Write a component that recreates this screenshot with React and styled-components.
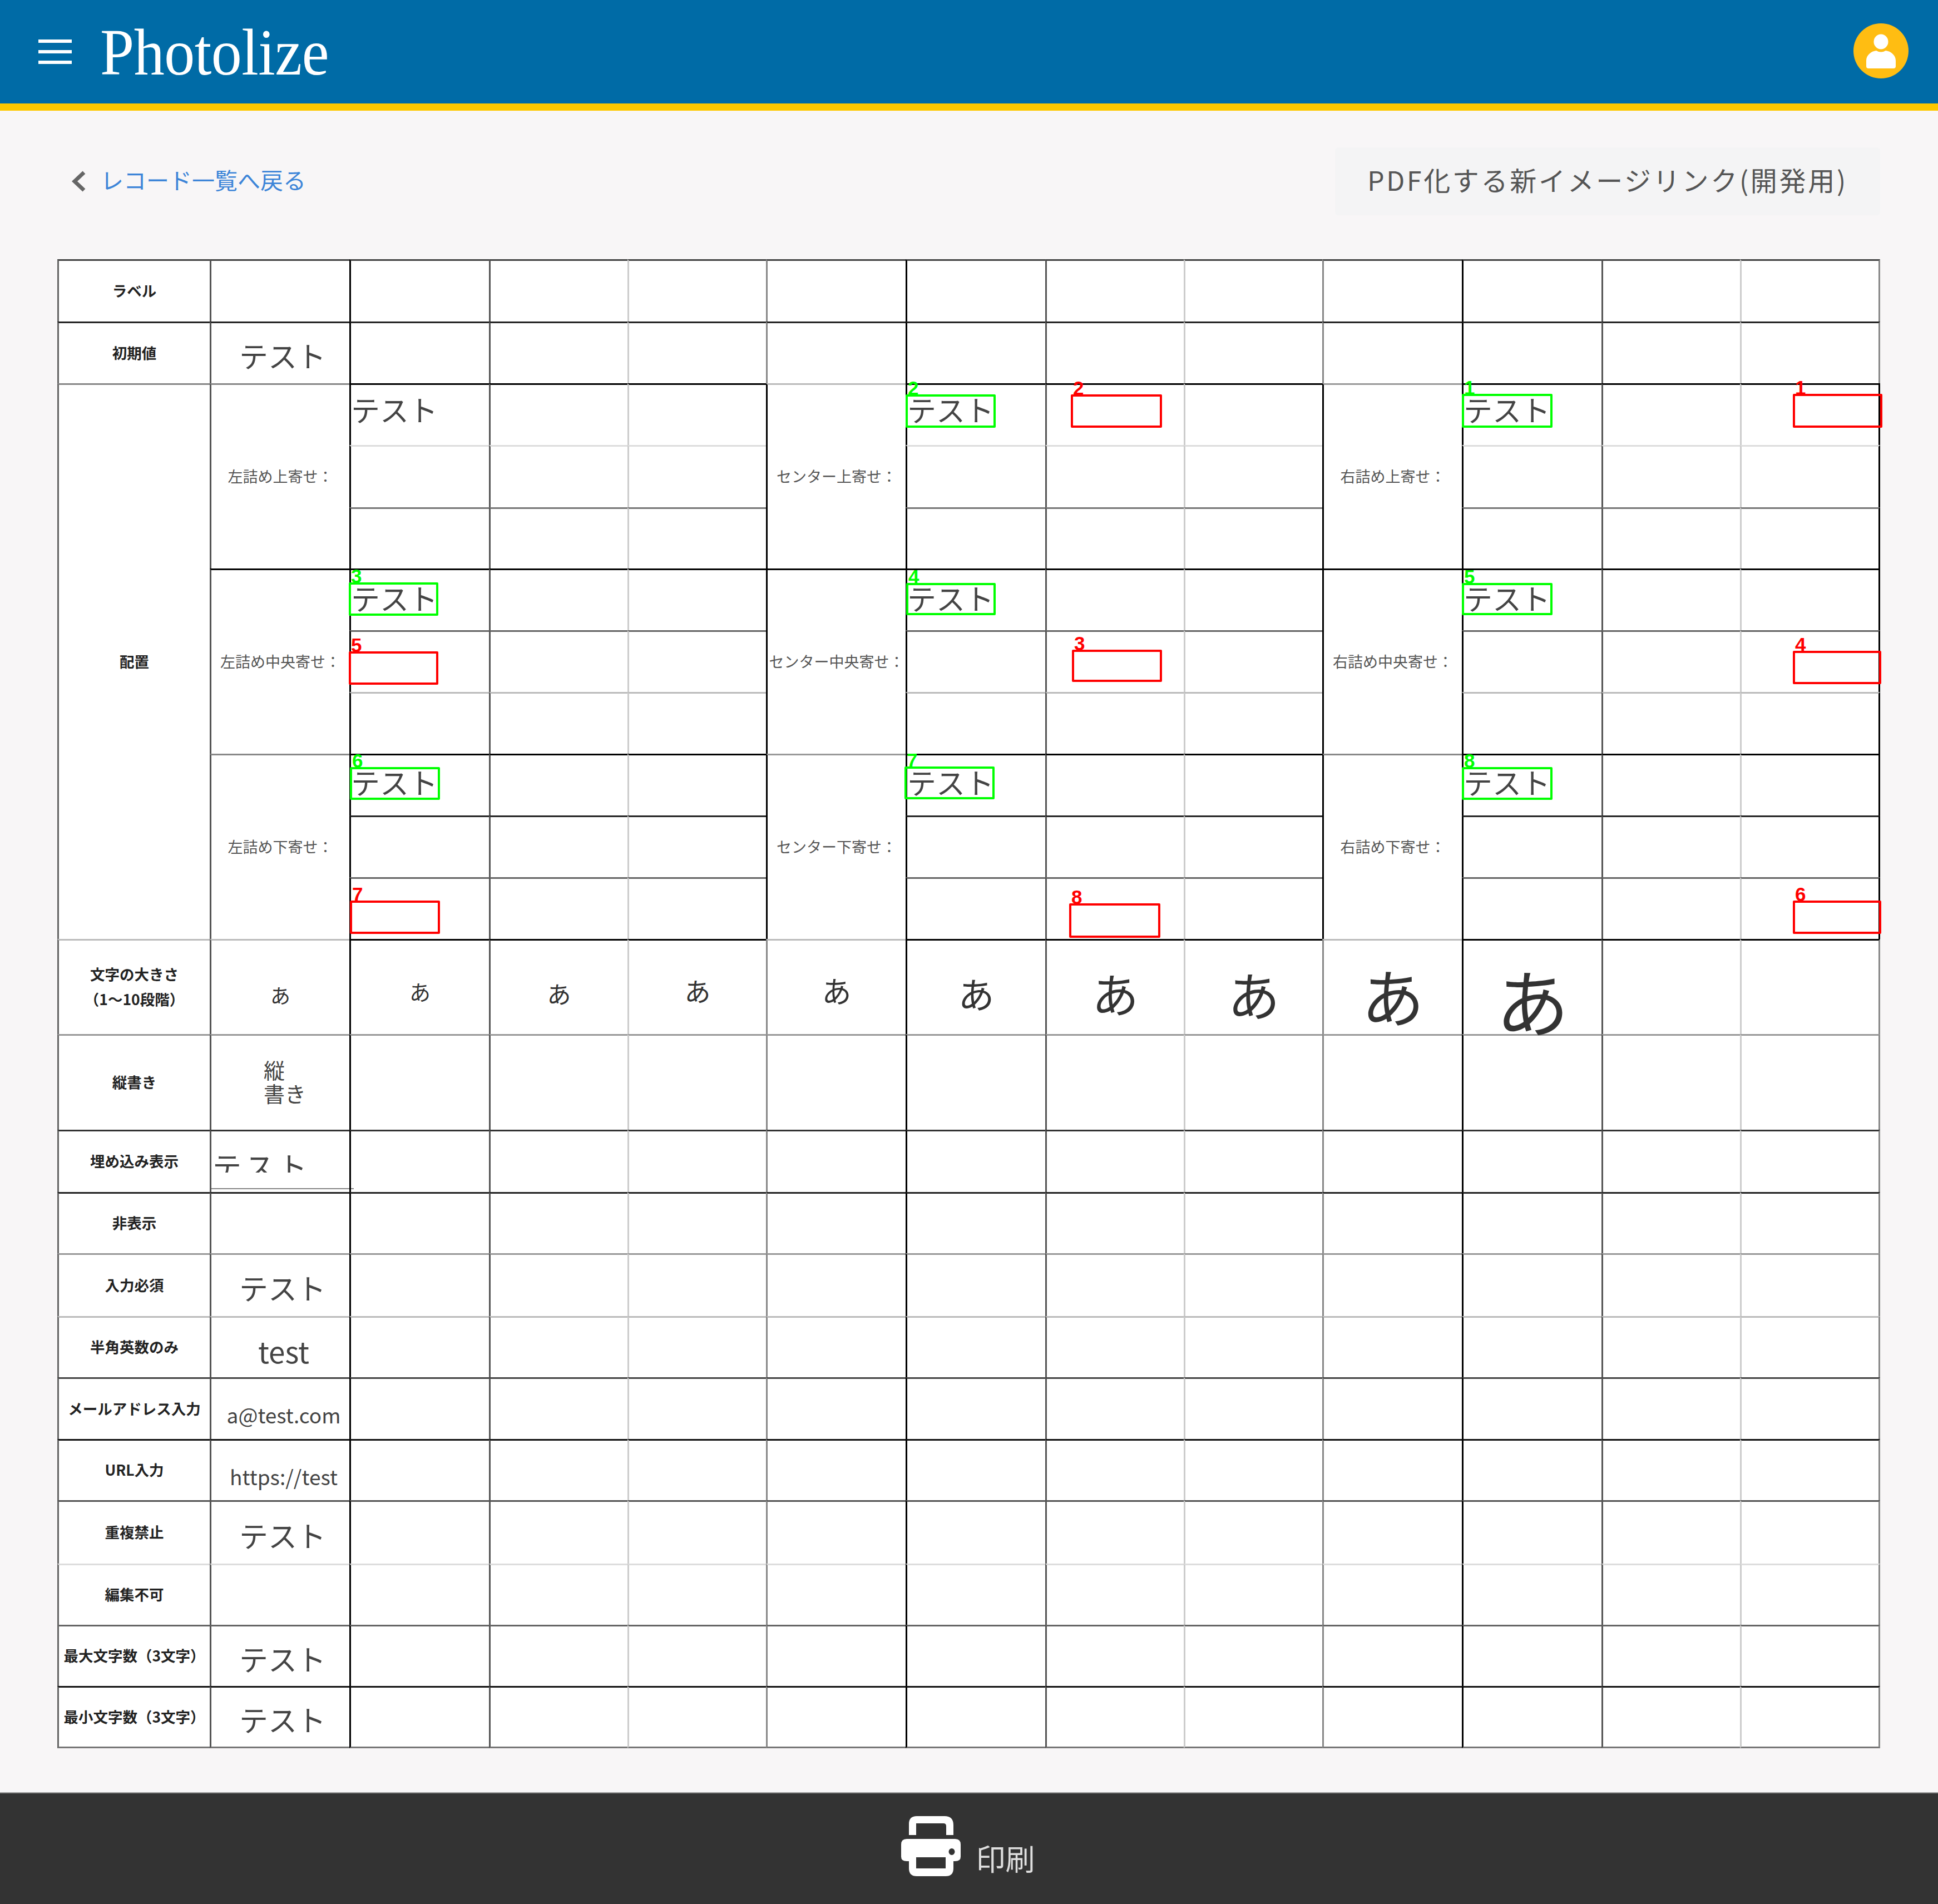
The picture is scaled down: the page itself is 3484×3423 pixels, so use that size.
import React from "react";
import styled, { createGlobalStyle, css } from "styled-components";

const Global = createGlobalStyle`
  html, body { margin: 0; padding: 0; background: #f8f6f7; }
  body { font-family: "Noto Sans CJK JP", "Noto Sans", sans-serif; color: #333; }
`;

const Page = styled.div`
  display: flex;
  flex-direction: column;
  width: 3484px;
  height: 3423px;
  background: #f8f6f7;
`;

const Header = styled.header`
  flex: none;
  display: flex;
  align-items: center;
  box-sizing: border-box;
  height: 199px;
  padding: 0 53px 0 69px;
  background: #006ba6;
  border-bottom: 13px solid #fdc800;
`;

const MenuIcon = styled.svg`
  flex: none;
  width: 60px;
  height: 44px;
  margin-right: 51px;
`;

const Logo = styled.div`
  font-family: "Liberation Serif", "Times New Roman", serif;
  font-size: 110px;
  line-height: 1;
  letter-spacing: -0.5px;
  color: #fff;
  transform: translateY(1px) scaleY(1.08);
`;

const Avatar = styled.svg`
  flex: none;
  width: 99px;
  height: 99px;
  margin: 0 0 3px auto;
`;

const Main = styled.main`
  flex: 1;
  display: flex;
  flex-direction: column;
  padding: 66px 104px 0 103px;
`;

const Toolbar = styled.div`
  flex: none;
  display: flex;
  align-items: center;
  justify-content: space-between;
  height: 122px;
  margin-bottom: 79px;
  padding-left: 26px;
`;

const BackLink = styled.a`
  display: flex;
  align-items: center;
  gap: 26px;
  font-size: 41px;
  line-height: 1;
  color: #3d85d8;
`;

const BackText = styled.span`
  padding-bottom: 8px;
`;

const Chevron = styled.svg`
  flex: none;
  width: 26px;
  height: 38px;
`;

const PdfButton = styled.button`
  display: flex;
  align-items: center;
  justify-content: center;
  box-sizing: border-box;
  width: 980px;
  height: 122px;
  padding: 0 0 8px;
  border: 0;
  border-radius: 6px;
  background: #f4f4f5;
  color: #555;
  font-family: inherit;
  font-size: 48px;
  letter-spacing: 3.7px;
`;

const SheetWrap = styled.div`
  position: relative;
  flex: none;
  width: 3277px;
`;

const Sheet = styled.table`
  width: 3277px;
  table-layout: fixed;
  border-collapse: separate;
  border-spacing: 0;
  background: #fff;
`;

const cellLines = css`
  box-sizing: border-box;
  padding: 0;
  border-top: 3px solid ${(p) => p.$top};
  border-left: 3px solid ${(p) => p.$left};
  border-right: ${(p) => (p.$right ? `3px solid ${p.$right}` : "0")};
  border-bottom: ${(p) => (p.$bottom ? `3px solid ${p.$bottom}` : "0")};
`;

const Cell = styled.td`
  ${cellLines}
  vertical-align: ${(p) => (p.$valign ? p.$valign : "middle")};
  text-align: ${(p) => (p.$align ? p.$align : "center")};
`;

const HeadCell = styled.th`
  ${cellLines}
  padding-bottom: 4px;
  vertical-align: middle;
  text-align: center;
  font-size: 26.5px;
  line-height: 45px;
  font-weight: 700;
  color: #222;
  white-space: nowrap;
`;

const AlignCell = styled.td`
  ${cellLines}
  padding-bottom: 4px;
  vertical-align: middle;
  text-align: center;
  font-size: 27px;
  color: #555;
  white-space: nowrap;
`;

const KanaText = styled.div`
  font-size: 52px;
  line-height: 60px;
  color: #444;
  padding: 8px 0 0 8px;
`;

const PlacedText = styled.div`
  font-size: 52px;
  line-height: 60px;
  color: #444;
  padding-top: ${(p) => p.$pad}px;
`;

const LatinText = styled.div`
  font-size: ${(p) => p.$size}px;
  line-height: 60px;
  color: #444;
  padding: ${(p) => p.$pad}px 0 0 12px;
`;

const SizeSample = styled.div`
  height: 100px;
  font-size: ${(p) => p.$size}px;
  line-height: 100px;
  color: #333;
  padding-top: ${(p) => p.$pad}px;
`;

const Vertical = styled.div`
  display: inline-block;
  width: 76px;
  margin: 0 0 6px 16px;
  font-size: 38px;
  line-height: 42px;
  text-align: left;
  color: #444;
`;

const EmbedField = styled.div`
  box-sizing: border-box;
  width: 256px;
  height: 77px;
  margin: 27px 0 0 0;
  border-bottom: 2px solid #888;
`;

const EmbedText = styled.div`
  height: 47px;
  overflow: hidden;
  padding-left: 2px;
  font-size: 52px;
  line-height: 70px;
  letter-spacing: 7px;
  color: #444;
  white-space: nowrap;
  text-align: left;
`;

const Frame = styled.div.attrs((p) => ({
  style: { left: p.$x, top: p.$y, width: p.$w, height: p.$h },
}))`
  position: absolute;
  box-sizing: border-box;
  border: 4px solid ${(p) => p.$color};
  border-radius: 2px;
  pointer-events: none;
`;

const FrameNumber = styled.span`
  position: absolute;
  left: 0;
  bottom: 100%;
  margin-bottom: 2px;
  font-family: "Liberation Sans", Arial, sans-serif;
  font-size: 35px;
  line-height: 26px;
  font-weight: 700;
  color: ${(p) => p.$color};
`;

const Footer = styled.footer`
  flex: none;
  display: flex;
  align-items: center;
  justify-content: center;
  gap: 28px;
  box-sizing: border-box;
  height: 201px;
  padding-right: 4px;
  background: #333;
  border-top: 2px solid #999;
`;

const PrinterIcon = styled.svg`
  flex: none;
  width: 107px;
  height: 108px;
  margin-bottom: 9px;
`;

const PrintLabel = styled.span`
  font-size: 53px;
  line-height: 1;
  font-weight: 400;
  color: #ddd;
  padding-top: 34px;
`;

const COL_WIDTHS = [274, 251, 251, 249, 249, 251, 251, 249, 249, 251, 251, 249, 252];
const V_GENERAL = ["#666", "#555", "#000", "#555", "#ccc", "#888", "#000", "#555", "#ccc", "#888", "#000", "#555", "#ccc"];
const V_PLACED = ["#666", "#555", "#000", "#555", "#ccc", "#000", "#000", "#555", "#ccc", "#000", "#000", "#555", "#ccc"];
const DATA_COLS = [2, 3, 4, 5, 6, 7, 8, 9, 10, 11, 12];

const ORIGIN_X = 103;
const ORIGIN_Y = 466;

const FRAMES = [
  ["#00ff00", "1", 2628, 2791, 708, 769],
  ["#ff0000", "1", 3223, 3384, 708, 769],
  ["#00ff00", "2", 1628, 1790, 709, 769],
  ["#ff0000", "2", 1925, 2089, 709, 769],
  ["#00ff00", "4", 1629, 1790, 1048, 1106],
  ["#ff0000", "3", 1927, 2089, 1168, 1226],
  ["#00ff00", "7", 1626, 1788, 1378, 1437],
  ["#00ff00", "3", 627, 788, 1047, 1107],
  ["#ff0000", "5", 627, 788, 1171, 1231],
  ["#00ff00", "6", 629, 791, 1379, 1438],
  ["#ff0000", "7", 629, 791, 1619, 1679],
  ["#00ff00", "5", 2628, 2791, 1048, 1106],
  ["#ff0000", "4", 3223, 3382, 1170, 1230],
  ["#00ff00", "8", 2628, 2791, 1379, 1438],
  ["#ff0000", "6", 3223, 3382, 1619, 1679],
  ["#ff0000", "8", 1922, 2086, 1624, 1686],
];

const TESUTO = "テスト";

const SIZES = [
  [36, 26], [38, 14], [43, 20], [47, 10], [53, 10],
  [65, 20], [84, 20], [94, 22], [113, 26], [132, 44],
];

const TOP_ROWS = [
  { label: "ラベル", h: 112, top: "#444" },
  { label: "初期値", h: 111, top: "#222", value: <KanaText>{TESUTO}</KanaText> },
];

const BOTTOM_ROWS = [
  {
    label: (<>文字の大きさ<br />（1～10段階）</>),
    h: 171,
    top: "#000",
    sideTop: "#bbb",
    samples: true,
  },
  {
    label: "縦書き",
    h: 172,
    top: "#999",
    value: (<Vertical>縦<br />書き</Vertical>),
  },
  {
    label: "埋め込み表示",
    h: 112,
    top: "#333",
    valign: "top",
    value: (<EmbedField><EmbedText>{TESUTO}</EmbedText></EmbedField>),
  },
  { label: "非表示", h: 110, top: "#222" },
  { label: "入力必須", h: 113, top: "#999", value: <KanaText>{TESUTO}</KanaText> },
  { label: "半角英数のみ", h: 110, top: "#bbb", value: <LatinText $size={53} $pad={10}>test</LatinText> },
  { label: "メールアドレス入力", h: 111, top: "#444", value: <LatinText $size={37} $pad={20}>a@test.com</LatinText> },
  { label: "URL入力", h: 110, top: "#111", value: <LatinText $size={37} $pad={20}>https://test</LatinText> },
  { label: "重複禁止", h: 114, top: "#555", value: <KanaText>{TESUTO}</KanaText> },
  { label: "編集不可", h: 110, top: "#ddd" },
  { label: "最大文字数（3文字）", h: 110, top: "#666", value: <KanaText>{TESUTO}</KanaText> },
  { label: "最小文字数（3文字）", h: 112, top: "#111", value: <KanaText>{TESUTO}</KanaText>, bottom: "#777" },
];

const PLACED_TOPS = ["#000", "#ddd", "#777", "#000", "#666", "#bbb", "#000", "#222", "#666"];
const GROUP_TOPS = [
  { c1: "#888", c5: "#bbb", c9: "#999" },
  { c1: "#000", c5: "#000", c9: "#000" },
  { c1: "#888", c5: "#999", c9: "#888" },
];
const GROUP_LABELS = [
  ["左詰め上寄せ：", "センター上寄せ：", "右詰め上寄せ："],
  ["左詰め中央寄せ：", "センター中央寄せ：", "右詰め中央寄せ："],
  ["左詰め下寄せ：", "センター下寄せ：", "右詰め下寄せ："],
];
const PLACED_H = [111, 112, 110, 111, 111, 111, 111, 111, 111];
const GROUP_PADS = [14, 20, 18];

function PlainRow({ row }) {
  const sideTop = row.sideTop || row.top;
  const cellTop = (c) => ([5, 9].includes(c) ? sideTop : row.top);
  return (
    <tr style={{ height: row.h }}>
      <HeadCell $top={sideTop} $left={V_GENERAL[0]} $bottom={row.bottom}>{row.label}</HeadCell>
      <Cell $top={sideTop} $left={V_GENERAL[1]} $bottom={row.bottom} $valign={row.valign}>
        {row.samples ? <SizeSample $size={SIZES[0][0]} $pad={SIZES[0][1]}>あ</SizeSample> : row.value}
      </Cell>
      {DATA_COLS.map((c) => (
        <Cell
          key={c}
          $top={cellTop(c)}
          $left={V_GENERAL[c]}
          $right={c === 12 ? "#888" : undefined}
          $bottom={row.bottom}
        >
          {row.samples && SIZES[c - 1] ? (
            <SizeSample $size={SIZES[c - 1][0]} $pad={SIZES[c - 1][1]}>あ</SizeSample>
          ) : null}
        </Cell>
      ))}
    </tr>
  );
}

function PlacedRow({ index }) {
  const group = Math.floor(index / 3);
  const inner = index % 3;
  const tops = GROUP_TOPS[group];
  const top = PLACED_TOPS[index];
  const dataCell = (c) => (
    <Cell
      key={c}
      $top={top}
      $left={V_PLACED[c]}
      $right={c === 12 ? "#000" : undefined}
      $valign="top"
      $align="left"
    >
      {inner === 0 && [2, 6, 10].includes(c) ? (
        <PlacedText $pad={GROUP_PADS[group]}>{TESUTO}</PlacedText>
      ) : null}
    </Cell>
  );
  return (
    <tr style={{ height: PLACED_H[index] }}>
      {index === 0 ? (
        <HeadCell rowSpan={9} $top="#888" $left={V_PLACED[0]}>配置</HeadCell>
      ) : null}
      {inner === 0 ? (
        <AlignCell rowSpan={3} $top={tops.c1} $left={V_PLACED[1]}>{GROUP_LABELS[group][0]}</AlignCell>
      ) : null}
      {[2, 3, 4].map(dataCell)}
      {inner === 0 ? (
        <AlignCell rowSpan={3} $top={tops.c5} $left={V_PLACED[5]}>{GROUP_LABELS[group][1]}</AlignCell>
      ) : null}
      {[6, 7, 8].map(dataCell)}
      {inner === 0 ? (
        <AlignCell rowSpan={3} $top={tops.c9} $left={V_PLACED[9]}>{GROUP_LABELS[group][2]}</AlignCell>
      ) : null}
      {[10, 11, 12].map(dataCell)}
    </tr>
  );
}

export default function App() {
  return (
    <Page>
      <Global />
      <Header>
        <MenuIcon viewBox="0 0 60 44" aria-hidden="true">
          <rect x="0" y="0" width="60" height="6" fill="#fff" />
          <rect x="0" y="19" width="60" height="6" fill="#fff" />
          <rect x="0" y="38" width="60" height="6" fill="#fff" />
        </MenuIcon>
        <Logo>Photolize</Logo>
        <Avatar viewBox="0 0 99 99" aria-hidden="true">
          <circle cx="49.5" cy="49.5" r="49.5" fill="#ffbd12" />
          <ellipse cx="49.5" cy="33" rx="13" ry="13.5" fill="#fff" />
          <path d="M23 77 V67 C23 57 32 50 41 49 Q49.5 54 58 49 C67 50 76 57 76 67 V77 Q76 81 72 81 H27 Q23 81 23 77 Z" fill="#fff" />
        </Avatar>
      </Header>
      <Main>
        <Toolbar>
          <BackLink>
            <Chevron viewBox="0 0 26 38" aria-hidden="true">
              <path d="M22 3 L5 19 L22 35" fill="none" stroke="#666" strokeWidth="7" />
            </Chevron>
            <BackText>レコード一覧へ戻る</BackText>
          </BackLink>
          <PdfButton>PDF化する新イメージリンク(開発用)</PdfButton>
        </Toolbar>
        <SheetWrap>
          <Sheet>
            <colgroup>
              {COL_WIDTHS.map((w, i) => (
                <col key={i} style={{ width: w }} />
              ))}
            </colgroup>
            <tbody>
              {TOP_ROWS.map((row, i) => (
                <PlainRow key={i} row={row} />
              ))}
              {PLACED_H.map((_, i) => (
                <PlacedRow key={i} index={i} />
              ))}
              {BOTTOM_ROWS.map((row, i) => (
                <PlainRow key={i} row={row} />
              ))}
            </tbody>
          </Sheet>
          {FRAMES.map(([color, n, x0, x1, y0, y1], i) => (
            <Frame
              key={i}
              $color={color}
              $x={x0 - ORIGIN_X}
              $y={y0 - ORIGIN_Y}
              $w={x1 - x0}
              $h={y1 - y0}
            >
              <FrameNumber $color={color}>{n}</FrameNumber>
            </Frame>
          ))}
        </SheetWrap>
      </Main>
      <Footer>
        <PrinterIcon viewBox="0 0 107 108" aria-hidden="true">
          <path
            d="M14 34 V14 Q14 0 28 0 H78 Q94 0 94 16 V34 H81 V18 Q81 13 76 13 H27 V34 Z"
            fill="#fff"
          />
          <path
            fillRule="evenodd"
            d="M10 41 H97 Q107 41 107 51 V73 Q107 81 97 81 H94 V94 Q94 108 80 108 H28 Q14 108 14 94 V81 H10 Q0 81 0 73 V51 Q0 41 10 41 Z M27 74 V94 H80 V74 Z M91 58 A5.5 6 0 1 0 91 70 A5.5 6 0 1 0 91 58 Z"
            fill="#fff"
          />
        </PrinterIcon>
        <PrintLabel>印刷</PrintLabel>
      </Footer>
    </Page>
  );
}
